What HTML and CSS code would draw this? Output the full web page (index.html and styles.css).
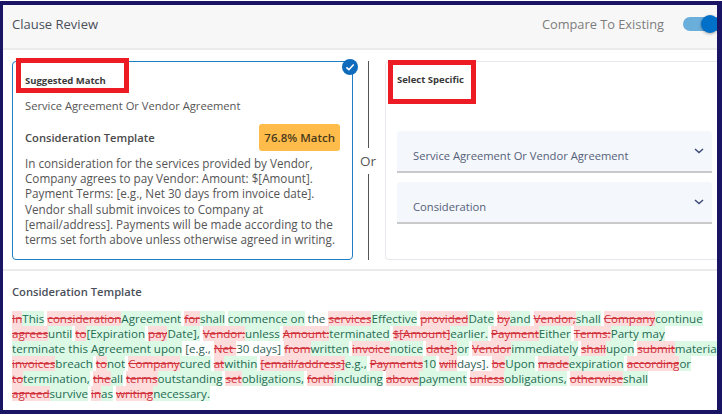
FILE: index.html
```html
<!doctype html>
<html lang="en">

<head>
    <meta charset="utf-8">
    <meta name="viewport" content="width=device-width, initial-scale=1, minimum-scale=1">
    <title>Clause Review</title>
    <link rel="stylesheet" href="styles.css">
</head>

<body>
    <div class="frame">
        <header class="top-bar">
            <h1>Clause Review</h1>
            <div class="compare">
                <span>Compare To Existing</span>
                <div class="toggle"><div class="knob"></div></div>
            </div>
        </header>

        <section class="picker">
            <div class="card suggested">
                <div class="check">
                    <svg viewBox="0 0 16 16" width="16" height="16">
                        <circle cx="8" cy="8" r="8" fill="#0f6cbd"></circle>
                        <path d="M4.4 8.3l2.5 2.4 4.8-5.2" fill="none" stroke="#fff" stroke-width="1.6"></path>
                    </svg>
                </div>
                <div class="card-label">Suggested Match</div>
                <div class="agreement">Service Agreement Or Vendor Agreement</div>
                <div class="template-row">
                    <span class="template-name">Consideration Template</span>
                    <span class="badge">76.8% Match</span>
                </div>
                <p class="template-text">In consideration for the services provided by Vendor, Company agrees to pay Vendor: Amount: $[Amount]. Payment Terms: [e.g., Net 30 days from invoice date]. Vendor shall submit invoices to Company at [email/address]. Payments will be made according to the terms set forth above unless otherwise agreed in writing.</p>
                <div class="callout callout-left"></div>
            </div>

            <div class="or-column">
                <div class="or-line"></div>
                <span>Or</span>
                <div class="or-line"></div>
            </div>

            <div class="card specific">
                <div class="card-label">Select Specific</div>
                <div class="select first-select">
                    <span>Service Agreement Or Vendor Agreement</span>
                    <svg class="chevron" viewBox="0 0 10 6" width="10" height="6"><path d="M1 1l4 3.6L9 1" fill="none" stroke="#3d4b78" stroke-width="1.5"></path></svg>
                </div>
                <div class="select">
                    <span>Consideration</span>
                    <svg class="chevron" viewBox="0 0 10 6" width="10" height="6"><path d="M1 1l4 3.6L9 1" fill="none" stroke="#3d4b78" stroke-width="1.5"></path></svg>
                </div>
                <div class="callout callout-right"></div>
            </div>
        </section>

        <section class="diff">
            <h2>Consideration Template</h2>
            <p class="diff-text">
                <del>In</del><ins>This</ins> <del>consideration</del><ins>Agreement</ins> <del>for</del><ins>shall</ins> <ins>commence on</ins> the <del>services</del><ins>Effective</ins> <del>provided</del><ins>Date</ins> <del>by</del><ins>and</ins> <del>Vendor,</del><ins>shall</ins> <del>Company</del><ins>continue</ins><br>
                <del>agrees</del><ins>until</ins> <del>to</del><ins>[Expiration</ins> <del>pay</del><ins>Date],</ins> <del>Vendor:</del><ins>unless</ins> <del>Amount:</del><ins>terminated</ins> <del>$[Amount]</del><ins>earlier.</ins> <del>Payment</del><ins>Either</ins> <del>Terms:</del><ins>Party may</ins><br>
                <ins>terminate this Agreement upon</ins> [e.g., <del>Net </del>30 days] <del>from</del><ins>written</ins> <del>invoice</del><ins>notice</ins> <del>date]:</del><ins>or</ins> <del>Vendor</del><ins>immediately</ins> <del>shall</del><ins>upon</ins> <del>submit</del><ins>material</ins><br>
                <del>invoices</del><ins>breach</ins> <del>to</del><ins>not</ins> <del>Company</del><ins>cured</ins> <del>at</del><ins>within</ins> <del>[email/address]</del><ins>e.g.,</ins> <del>Payments</del><ins>10</ins> <del>will</del>days]. <del>be</del><ins>Upon</ins> <del>made</del><ins>expiration</ins> <del>according</del><ins>or</ins><br>
                <del>to</del><ins>termination,</ins> <del>the</del><ins>all</ins> <del>terms</del><ins>outstanding</ins> <del>set</del><ins>obligations,</ins> <del>forth</del><ins>including</ins> <del>above</del><ins>payment</ins> <del>unless</del><ins>obligations,</ins> <del>otherwise</del><ins>shall</ins><br>
                <del>agreed</del><ins>survive</ins> <del>in</del><ins>as</ins> <del>writing</del><ins>necessary.</ins>
            </p>
        </section>
    </div>
</body>

</html>
```

FILE: styles.css
```css
* {
    box-sizing: border-box;
}

body {
    margin: 0;
    padding-top: 1px;
    background: #fff;
    font-family: "Open Sans", "Noto Sans", sans-serif;
    font-size: 11.2px;
    color: #555;
}

.frame {
    width: 722px;
    height: 413px;
    border-style: solid;
    border-color: #1a1464;
    border-width: 4px 5px 4px 3px;
    overflow: hidden;
    background: #fff;
}

.top-bar {
    display: flex;
    align-items: center;
    justify-content: space-between;
    height: 45px;
    padding: 0 0 5px 9px;
    background: #f7f7f7;
    border-bottom: 2px solid #ebebeb;
}

h1 {
    margin: 0;
    font-size: 13px;
    font-weight: 500;
    color: #4a4f5a;
}

.compare {
    display: flex;
    align-items: center;
    gap: 19px;
    font-size: 12.8px;
    color: #7d7d7d;
}

.toggle {
    position: relative;
    width: 34px;
    height: 14px;
    border-radius: 7px 0 0 7px;
    background: #6aaedb;
}

.knob {
    position: absolute;
    left: 18px;
    top: -2px;
    width: 18px;
    height: 18px;
    border-radius: 50%;
    background: #0070c9;
    box-shadow: 0 1px 3px rgba(0, 0, 0, 0.35);
}

.picker {
    display: flex;
    height: 221px;
    padding: 11px 0 10px 9px;
    border-bottom: 2px solid #ebebeb;
}

.card {
    position: relative;
    height: 199px;
    border-radius: 4px;
    background: #fff;
}

.suggested {
    width: 341px;
    padding: 11px 12px 0 12px;
    border: 1.5px solid #1f7ec4;
}

.specific {
    flex: 1;
    margin-right: -6px;
    padding: 10px 0 0 11px;
    border: 1px solid #e5e8ec;
}

.check {
    position: absolute;
    top: -3px;
    right: -6px;
    width: 16px;
    height: 16px;
}

.check svg {
    display: block;
}

.card-label {
    font-size: 9.5px;
    font-weight: 700;
    line-height: 15px;
    color: #3a3a3a;
}

.agreement {
    margin-top: 10px;
    line-height: 16px;
}

.template-row {
    display: flex;
    align-items: center;
    justify-content: space-between;
    margin-top: 10px;
}

.template-name {
    font-weight: 600;
    color: #4a4a4a;
}

.badge {
    padding: 5px 5px;
    border-radius: 3px;
    background: #ffbc4b;
    font-size: 11.5px;
    font-weight: 600;
    line-height: 17px;
    color: #4a3a1a;
}

.template-text {
    margin: 5px 0 0 0;
    font-size: 11.7px;
    line-height: 15.2px;
}

.or-column {
    display: flex;
    flex-direction: column;
    align-items: center;
    width: 32px;
    height: 199px;
    padding-right: 2px;
    font-size: 13.5px;
    line-height: 26px;
}

.or-line {
    flex: 1;
    width: 1px;
    background: #555;
}

.select {
    position: relative;
    width: 315px;
    height: 42px;
    padding: 16px 0 0 16px;
    border-radius: 3px 3px 0 0;
    background: #f4f7fb;
    border-bottom: 2px solid #c9c9c9;
    line-height: 17px;
    color: #54607a;
    margin-bottom: 9px;
}

.first-select {
    margin-top: 44px;
}

.chevron {
    position: absolute;
    top: 17px;
    right: 8px;
}

.callout {
    position: absolute;
    border: 5px solid #ed1c24;
}

.callout-left {
    left: 3px;
    top: -4px;
    width: 113px;
    height: 35px;
}

.callout-right {
    left: 2px;
    top: -2px;
    width: 88px;
    height: 44px;
}

.diff {
    padding: 13px 0 0 9px;
}

h2 {
    margin: 0 0 11px 0;
    font-size: 11.2px;
    font-weight: 600;
    line-height: 16px;
    color: #4a4f5a;
}

.diff-text {
    margin: 0;
    font-size: 11.6px;
    line-height: 15px;
    white-space: nowrap;
    color: #2f5f55;
}

ins {
    text-decoration: none;
    background: #dcf9e6;
    color: #1f6b52;
}

del {
    background: #ffdcdc;
    color: #d0313a;
}
```
